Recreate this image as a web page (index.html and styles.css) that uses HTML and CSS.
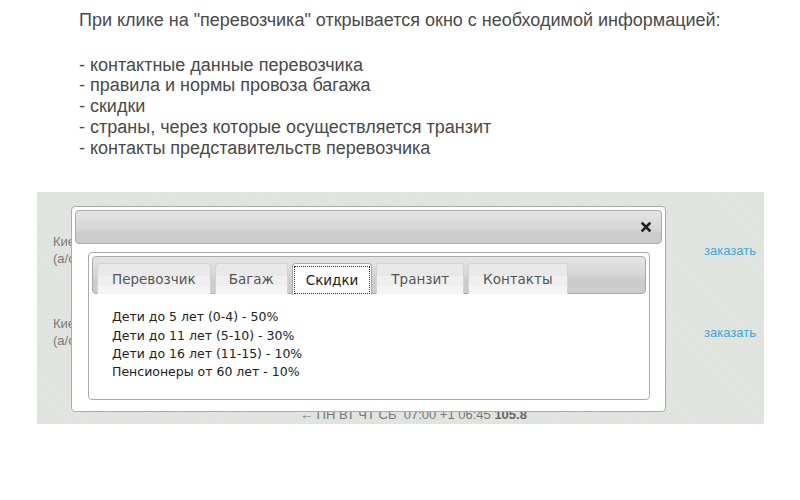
FILE: index.html
```html
<!DOCTYPE html>
<html>
<head>
<meta charset="utf-8">
<link rel="stylesheet" href="styles.css">
</head>
<body>
<div class="intro">
  <p class="lead">При клике на "перевозчика" открывается окно с необходимой информацией:</p>
  <ul class="points">
    <li>- контактные данные перевозчика</li>
    <li>- правила и нормы провоза багажа</li>
    <li>- скидки</li>
    <li>- страны, через которые осуществляется транзит</li>
    <li>- контакты представительств перевозчика</li>
  </ul>
</div>

<div class="board">
  <div class="row">
    <div class="route">Киев<br>(а/с)</div>
    <a class="order" href="#">заказать</a>
  </div>
  <div class="row">
    <div class="route">Киев<br>(а/с)</div>
    <a class="order" href="#">заказать</a>
  </div>
  <div class="foot">← ПН ВТ ЧТ СБ&nbsp; 07:00 +1 06:45 <b>105.8</b></div>

  <div class="dialog">
    <div class="titlebar">
      <svg class="close" width="10" height="10" viewBox="0 0 10 10"><path d="M1.5 1.5 L8.5 8.5 M8.5 1.5 L1.5 8.5" stroke="#222" stroke-width="2.6" stroke-linecap="square"/></svg>
    </div>
    <div class="tabs">
      <ul class="tabnav">
        <li class="tab">Перевозчик</li>
        <li class="tab">Багаж</li>
        <li class="tab active"><span class="focus">Скидки</span></li>
        <li class="tab">Транзит</li>
        <li class="tab">Контакты</li>
      </ul>
      <div class="tabbody">
        Дети до 5 лет (0-4) - 50%<br>
        Дети до 11 лет (5-10) - 30%<br>
        Дети до 16 лет (11-15) - 10%<br>
        Пенсионеры от 60 лет - 10%
      </div>
    </div>
  </div>
</div>
</body>
</html>
```

FILE: styles.css
```css
* { box-sizing: border-box; }
html, body { margin: 0; padding: 0; background: #fff; }
body { width: 800px; height: 500px; overflow: hidden; font-family: "Liberation Sans", Arial, sans-serif; }

.intro { padding: 10px 0 0 79px; color: #4a4a4a; font-size: 18px; line-height: 20.7px; }
.lead { margin: 0 0 24px; }
.points { list-style: none; margin: 0; padding: 0; }

.board {
  position: relative;
  margin: 34px 0 0 37px;
  width: 727px;
  height: 232px;
  padding: 17px 8px 0 16px;
  background-color: #dfe3de;
  background-image: repeating-linear-gradient(45deg, rgba(255,255,255,0.12) 0 1px, transparent 1px 3px);
  font-size: 13px;
  color: #7a7a7a;
}
.row { height: 82px; display: flex; justify-content: space-between; align-items: center; }
.route { line-height: 17px; }
.order { color: #3aa8dc; text-decoration: none; font-size: 13px; }
.foot { margin: 33px 0 0 247px; line-height: 18px; color: #777; }
.foot b { color: #666; }

.dialog {
  position: absolute;
  left: 34px; top: 14px;
  width: 595px; height: 206px;
  background: #fff;
  border: 1px solid #aaa;
  border-radius: 4px;
  padding: 3px;
}
.titlebar {
  height: 34px;
  border: 1px solid #aaa;
  border-radius: 4px;
  background: linear-gradient(#e4e4e4 0, #e0e0e0 6px, #dadada 12px, #d6d6d6 18px, #cccccc 22px, #cccccc 100%);
  display: flex; align-items: center; justify-content: flex-end;
  padding-right: 10px;
}
.close { display: block; }

.tabs {
  margin: 8px 12px 0 13px;
  height: 148px;
  border: 1px solid #aaa;
  border-radius: 4px;
  padding: 3px;
  font-family: "DejaVu Sans", Verdana, sans-serif;
}
.tabnav {
  list-style: none; margin: 0;
  height: 38px;
  padding: 6px 0 0 4px;
  display: flex; gap: 4px;
  border: 1px solid #aaa;
  border-radius: 4px;
  background: linear-gradient(#e4e4e4 0, #e0e0e0 6px, #dadada 12px, #d6d6d6 18px, #cccccc 22px, #cccccc 100%);
}
.tab {
  height: 31px;
  padding: 0 14px;
  border: 1px solid #d3d3d3;
  border-bottom: 0;
  border-radius: 4px 4px 0 0;
  background: linear-gradient(#e8e8e8 0, #e8e8e8 40%, #efefef 40%, #efefef 75%, #f5f5f5 75%);
  color: #555;
  font-size: 13.5px;
  line-height: 30px;
  margin-bottom: -1px;
}
.tab:nth-child(2) { padding: 0 13px; }
.tab.active { background: #fff; border-color: #aaa; color: #212121; padding: 2px 1px 0; height: 32px; }
.focus { display: block; border: 1px dotted #333; padding: 0 11px; line-height: 26px; }
.tabbody {
  padding: 14px 20px;
  font-size: 12.5px;
  line-height: 18.3px;
  color: #222;
}
```
